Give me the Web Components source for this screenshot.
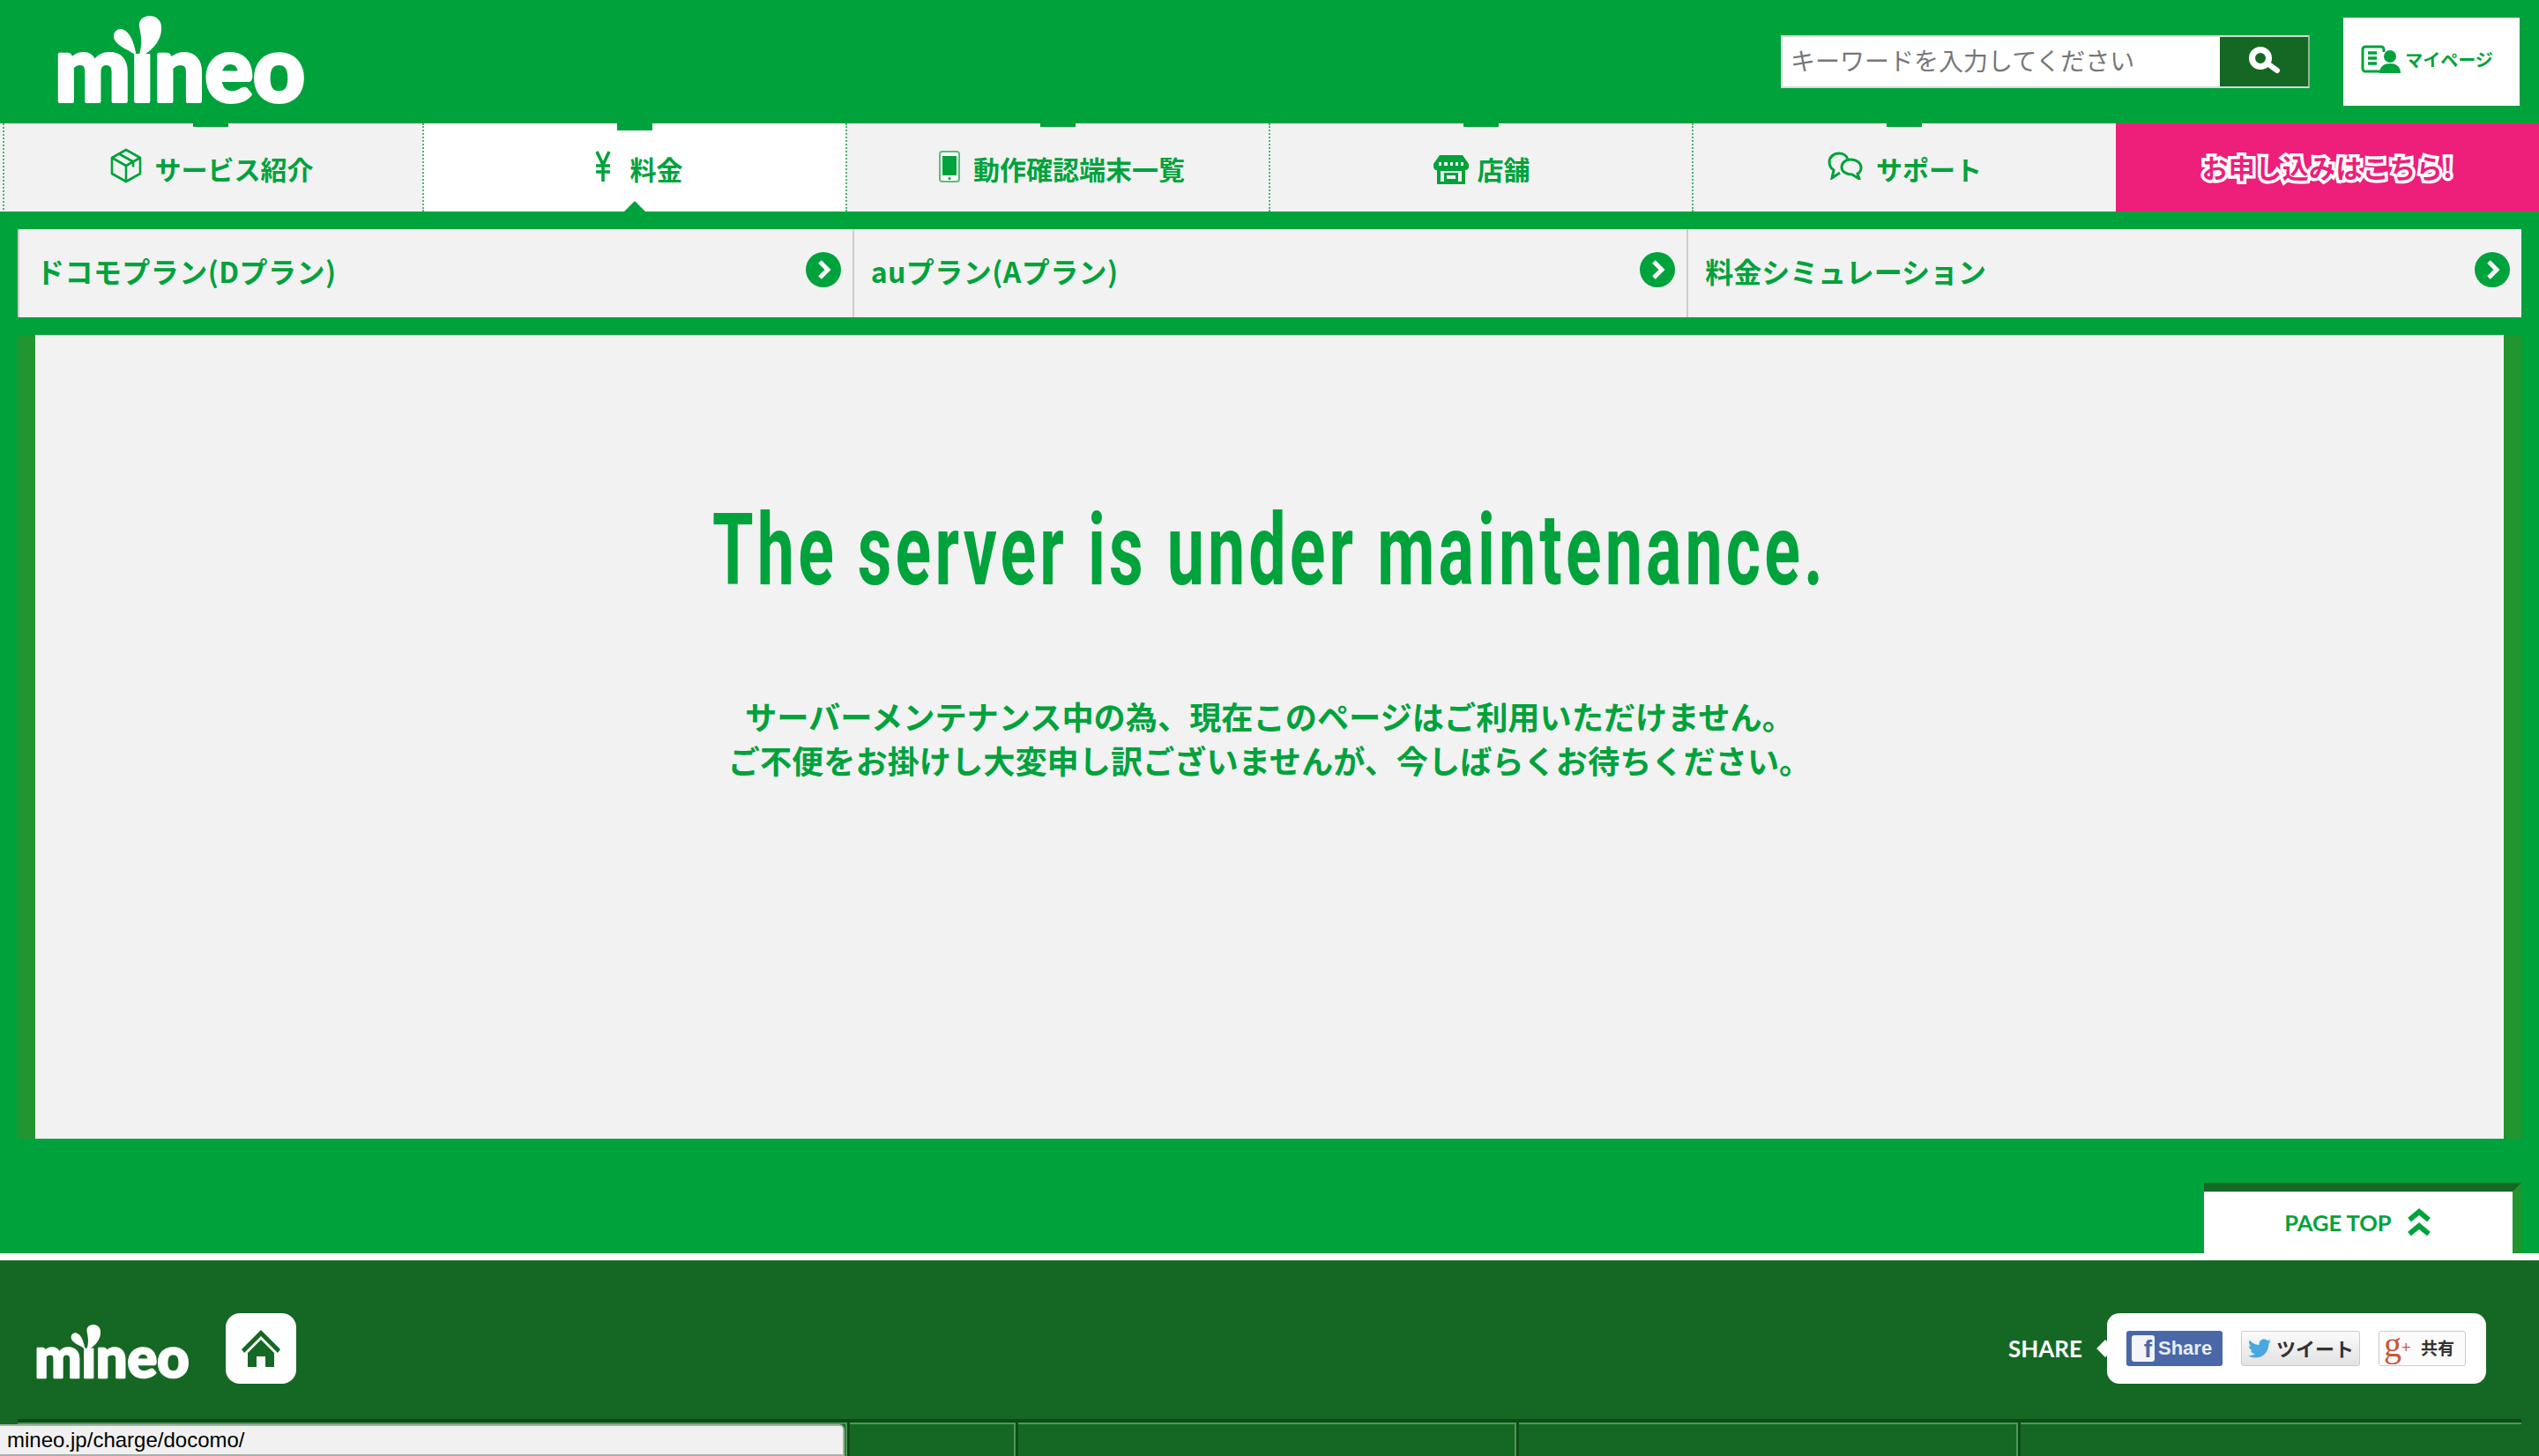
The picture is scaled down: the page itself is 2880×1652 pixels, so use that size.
<!DOCTYPE html>
<html lang="ja">
<head>
<meta charset="utf-8">
<title>mineo</title>
<style>
  html, body { margin: 0; height: 100%; overflow: hidden; }
  body { background: #00a23c; font-family: "Noto Sans CJK JP", "Noto Sans", sans-serif; }
</style>
</head>
<body>
<mineo-header></mineo-header>
<mineo-nav></mineo-nav>
<sub-nav></sub-nav>
<maintenance-panel></maintenance-panel>
<page-top></page-top>
<mineo-footer></mineo-footer>
<status-bubble>mineo.jp/charge/docomo/</status-bubble>

<script>
class MineoLogo extends HTMLElement {
  connectedCallback() {
    const w = this.getAttribute('width') || 288;
    const bg = this.getAttribute('bg') || '#00a23c';
    this.attachShadow({ mode: 'open' });
    this.shadowRoot.innerHTML = `
      <style>
        :host { display: block; line-height: 0; }
        svg { overflow: visible; display: block; }
        text { font-family: Lato, sans-serif; font-weight: 900; font-size: 102px; }
      </style>
      <svg width="${w}" viewBox="-3 0 288 100" fill="#fff">
        <text x="-1" y="97" textLength="284" lengthAdjust="spacingAndGlyphs" stroke="#fff" stroke-width="4" stroke-linejoin="round">mineo</text>
        <rect x="84" y="18" width="30" height="25" fill="${bg}"/>
        <path d="M94 47C108 42 121 28 120 13 120 4 113 0 107 0 99 0 94 5 95 12 96 20 100 30 94 47Z"/>
        <path d="M92 46C90 38 88 22 78 16 72 13 66 17 66 23 66 29 72 33 78 37 84 40 88 42 92 46Z"/>
      </svg>
    `;
  }
}
customElements.define('mineo-logo', MineoLogo);

class MineoHeader extends HTMLElement {
  connectedCallback() {
    this.attachShadow({ mode: 'open' });
    this.shadowRoot.innerHTML = `
      <style>
        :host { display: flex; height: 140px; box-sizing: border-box; padding: 18px 22px 0 60px; justify-content: space-between; align-items: flex-start; }
        .right { display: flex; align-items: center; gap: 38px; padding-top: 2px; }
        .search { display: flex; width: 600px; height: 60px; box-sizing: border-box; background: #fff; border: 2px solid #d8d8d8; border-right-color: #8fb897; }
        .field { flex: 1; padding-left: 9px; font-size: 28px; line-height: 52px; color: #777; white-space: nowrap; }
        .btn { width: 100px; background: #156823; display: flex; align-items: center; justify-content: center; }
        .mypage { width: 200px; height: 100px; background: #fff; display: flex; align-items: center; justify-content: center; gap: 4px; color: #00a23c; font-size: 20px; font-weight: 700; padding: 0 10px 6px 0; box-sizing: border-box; }
      </style>
      <mineo-logo></mineo-logo>
      <div class="right">
        <div class="search">
          <div class="field">キーワードを入力してください</div>
          <div class="btn">
            <svg width="38" height="36" viewBox="0 0 38 36"><circle cx="15" cy="14" r="9.500" fill="none" stroke="#fff" stroke-width="7"/><path d="M23 20l11 8" stroke="#fff" stroke-width="6" stroke-linecap="round"/></svg>
          </div>
        </div>
        <div class="mypage">
          <svg width="46" height="32" viewBox="0 0 46 32" fill="none">
            <path d="M24 30H5a3 3 0 0 1-3-3V5a3 3 0 0 1 3-3h18a3 3 0 0 1 3 3v3" stroke="#00a23c" stroke-width="3"/>
            <path d="M8 9h10M8 15h10M8 21h10" stroke="#00a23c" stroke-width="3.500"/>
            <circle cx="33" cy="13" r="7" fill="#00a23c"/>
            <path d="M21 32c0-8 6-11 12-11s12 3 12 11z" fill="#00a23c"/>
          </svg>
          <span>マイページ</span>
        </div>
      </div>
    `;
  }
}
customElements.define('mineo-header', MineoHeader);

class NavTab extends HTMLElement {
  connectedCallback() {
    this.attachShadow({ mode: 'open' });
    this.shadowRoot.innerHTML = `
      <style>
        :host { display: flex; position: relative; align-items: center; justify-content: center; gap: var(--gap, 15px); margin-left: -1px; background: #f2f2f2; color: #00a23c; font-size: 30px; font-weight: 700; border-left: 2px dotted #4fb56f; box-sizing: border-box; padding: 2px 0 0 var(--shift, 0); }
        :host([active]) { background: #fff; }
        :host([first]) { margin-left: 0; border-left: 0; background: repeating-linear-gradient(#4fb56f 0 2px, transparent 2px 4px) 3px 0 / 2px 100% no-repeat, #f2f2f2; }
        :host::before { content: ""; position: absolute; top: 0; left: 50%; margin-left: -21px; width: 40px; height: 4px; background: #00a23c; }
        :host([active])::before { height: 8px; }
        :host([active])::after { content: ""; position: absolute; bottom: 0; left: 50%; margin-left: -13px; border: 12px solid transparent; border-top: 0; border-bottom-color: #00a23c; }
        ::slotted(svg) { display: block; }
      </style>
      <slot name="icon"></slot><slot></slot>
    `;
  }
}
customElements.define('nav-tab', NavTab);

class MineoNav extends HTMLElement {
  connectedCallback() {
    this.attachShadow({ mode: 'open' });
    this.shadowRoot.innerHTML = `
      <style>
        :host { display: grid; grid-template-columns: repeat(6, 1fr); height: 100px; }
        .apply { display: flex; align-items: center; justify-content: center; background: #ee1e7b; color: #ee1e7b; font-size: 30px; letter-spacing: .4px; font-weight: 700; -webkit-text-stroke: 7px #fff; paint-order: stroke fill; stroke-linejoin: round; padding-bottom: 2px; box-sizing: border-box; }
      </style>
      <nav-tab first>
        <svg slot="icon" style="margin-top:-6px" width="36" height="40" viewBox="0 0 36 40" fill="none" stroke="#00a23c" stroke-width="2.600" stroke-linejoin="round">
          <path d="M18 2l16 9v18l-16 9-16-9V11z"/><path d="M2 11l16 9 16-9M18 20v18M10 6.500l16 9v6"/>
        </svg>
        サービス紹介
      </nav-tab>
      <nav-tab active style="--gap:22px;--shift:8px">
        <svg slot="icon" style="margin-top:-4px" width="18" height="36" viewBox="0 0 18 36" fill="none" stroke="#00a23c" stroke-width="3.600">
          <path d="M2 1l7 15 7-15M9 16v19M1 17h16M1 24h16"/>
        </svg>
        料金
      </nav-tab>
      <nav-tab style="--shift:8px">
        <svg slot="icon" style="margin-top:-4px" width="24" height="36" viewBox="0 0 24 36">
          <rect x="1" y="1" width="22" height="34" rx="3" fill="#fff" stroke="#5cbb7c" stroke-width="2"/>
          <rect x="4" y="6" width="16" height="22" fill="#00a23c"/>
          <circle cx="12" cy="31.500" r="1.600" fill="#00a23c"/>
        </svg>
        動作確認端末一覧
      </nav-tab>
      <nav-tab style="--gap:10px">
        <svg slot="icon" style="margin-top:2px" width="40" height="33" viewBox="0 0 40 33" fill="#00a23c">
          <path d="M7 0h26l7 10v3a4 4 0 0 1-4 4v16H4V17a4 4 0 0 1-4-4V10z"/>
          <path d="M6 8h28v4H6z" fill="#f2f2f2"/>
          <path d="M9 8h3v4H9zM16 8h3v4h-3zM22 8h3v4h-3zM28 8h3v4h-3z"/>
          <path d="M8 18h24v12H8z" fill="#f2f2f2"/>
          <path d="M12 20h16v10h-3v-7H15v7h-3z"/>
          <path d="M15 27h10v3H15z"/>
        </svg>
        店舗
      </nav-tab>
      <nav-tab>
        <svg slot="icon" style="margin-top:-6px" width="40" height="32" viewBox="0 0 40 32" fill="none" stroke="#00a23c" stroke-width="3">
          <path d="M14 24l-9 6 2-9c-3-2-5-6-5-9C2 6 7 2 13 2c5 0 9 3 10 7"/>
          <path d="M26 9c7 0 12 4 12 9 0 3-2 6-4 7l2 6-8-5c-6 0-12-3-12-8 0-5 4-9 10-9z"/>
        </svg>
        サポート
      </nav-tab>
      <div class="apply">お申し込みはこちら!</div>
    `;
  }
}
customElements.define('mineo-nav', MineoNav);

class SubLink extends HTMLElement {
  connectedCallback() {
    this.attachShadow({ mode: 'open' });
    this.shadowRoot.innerHTML = `
      <style>
        :host { display: flex; align-items: center; justify-content: space-between; padding: 0 13px 0 19px; color: #00a23c; font-size: 32px; font-weight: 700; border-left: 2px solid #ccc; box-sizing: border-box; }
        :host(:first-child) { border-left: 0; padding-left: 21px; }
        span { margin-top: -7px; }
        svg { display: block; margin-top: -8px; }
      </style>
      <span><slot></slot></span>
      <svg width="40" height="40" viewBox="0 0 40 40">
        <circle cx="20" cy="20" r="20" fill="#00a23c"/>
        <path d="M16 11l9 9-9 9" fill="none" stroke="#fff" stroke-width="5"/>
      </svg>
    `;
  }
}
customElements.define('sub-link', SubLink);

class SubNav extends HTMLElement {
  connectedCallback() {
    this.attachShadow({ mode: 'open' });
    this.shadowRoot.innerHTML = `
      <style>
        :host { display: grid; grid-template-columns: repeat(3, 1fr); height: 100px; margin: 20px 20px 0; background: #f2f2f2; }
      </style>
      <sub-link style="letter-spacing:.45px">ドコモプラン(Dプラン)</sub-link>
      <sub-link style="letter-spacing:.45px">auプラン(Aプラン)</sub-link>
      <sub-link>料金シミュレーション</sub-link>
    `;
  }
}
customElements.define('sub-nav', SubNav);

class MaintenancePanel extends HTMLElement {
  connectedCallback() {
    this.attachShadow({ mode: 'open' });
    this.shadowRoot.innerHTML = `
      <style>
        :host { display: block; height: 912px; margin: 20px 20px 0; box-sizing: border-box; padding-top: 194px; background: #f2f2f2; border: solid #21962f; border-width: 0 20px; color: #00a23c; text-align: center; }
        h1 { display: block; margin: 0; font: 700 114px/100px Roboto, sans-serif; letter-spacing: 6.3px; white-space: nowrap; transform: scaleX(.66); }
        p { margin: 113px 0 0; font-size: 36.2px; line-height: 50px; font-weight: 700; }
      </style>
      <h1>The server is under maintenance.</h1>
      <p>サーバーメンテナンス中の為、現在このページはご利用いただけません。<br>ご不便をお掛けし大変申し訳ございませんが、今しばらくお待ちください。</p>
    `;
  }
}
customElements.define('maintenance-panel', MaintenancePanel);

class PageTop extends HTMLElement {
  connectedCallback() {
    this.attachShadow({ mode: 'open' });
    this.shadowRoot.innerHTML = `
      <style>
        :host { display: flex; justify-content: flex-end; height: 130px; padding: 50px 20px 0 0; box-sizing: border-box; }
        .tab { width: 360px; height: 80px; box-sizing: border-box; background: #fff; border-top: 10px solid #156823; border-right: 10px solid #21962f; display: flex; align-items: center; justify-content: center; gap: 18px; color: #00a23c; font: 700 25.5px Lato, sans-serif; padding-right: 2px; }
        svg { display: block; }
      </style>
      <div class="tab">
        <span>PAGE TOP</span>
        <svg width="26" height="32" viewBox="0 0 26 32" fill="none" stroke="#00a23c" stroke-width="6">
          <path d="M2 13l11-9 11 9M2 29l11-9 11 9"/>
        </svg>
      </div>
    `;
  }
}
customElements.define('page-top', PageTop);

class ShareBox extends HTMLElement {
  connectedCallback() {
    this.attachShadow({ mode: 'open' });
    this.shadowRoot.innerHTML = `
      <style>
        :host { display: flex; align-items: center; position: relative; width: 430px; height: 80px; box-sizing: border-box; padding-left: 22px; gap: 21px; background: #fff; border-radius: 14px; font-family: "Liberation Sans", "Noto Sans CJK JP", sans-serif; }
        :host::before { content: ""; position: absolute; left: -12px; top: 30px; width: 20px; height: 20px; background: #fff; transform: rotate(45deg) scale(.7); }
        .b { display: flex; align-items: center; box-sizing: border-box; height: 40px; border-radius: 3px; font-weight: 700; white-space: nowrap; }
        .fb { width: 109px; background: #4a67a8; color: #e8ecf5; font-size: 22px; gap: 4px; padding-left: 6px; }
        .fb i { display: block; width: 26px; height: 30px; background: #f3f5fa; border-radius: 3px; color: #4a67a8; font: 700 28px/32px "Liberation Sans", sans-serif; text-align: right; padding-right: 3px; box-sizing: border-box; }
        .tw, .gp { border: 1px solid #ccc; background: linear-gradient(#fbfbfb, #e2e2e2); color: #333; }
        .tw { width: 135px; font-size: 22px; gap: 5px; padding-left: 6px; font-family: "Noto Sans CJK JP", sans-serif; }
        .tw span, .gp span { margin-top: -3px; }
        .gp { width: 99px; font-size: 19px; gap: 4px; padding-left: 5px; background: #fbfbfb; font-family: "Noto Sans CJK JP", sans-serif; }
        .gp i { font: 400 40px/30px "Liberation Serif", serif; color: #c9573e; width: 38px; margin-top: -8px; }
        .gp i sup { font-size: 18px; line-height: 0; vertical-align: 4px; font-family: "Liberation Sans", sans-serif; }
      </style>
      <div class="b fb"><i>f</i><span>Share</span></div>
      <div class="b tw">
        <svg width="28" height="26" viewBox="0 0 24 24" fill="#4aa8e0"><path d="M23.953 4.57a10 10 0 01-2.825.775 4.958 4.958 0 002.163-2.723c-.951.555-2.005.959-3.127 1.184a4.92 4.92 0 00-8.384 4.482C7.69 8.095 4.067 6.13 1.64 3.162a4.822 4.822 0 00-.666 2.475c0 1.71.87 3.213 2.188 4.096a4.904 4.904 0 01-2.228-.616v.06a4.923 4.923 0 003.946 4.827 4.996 4.996 0 01-2.212.085 4.936 4.936 0 004.604 3.417 9.867 9.867 0 01-6.102 2.105c-.39 0-.779-.023-1.17-.067a13.995 13.995 0 007.557 2.209c9.053 0 13.998-7.496 13.998-13.985 0-.21 0-.42-.015-.63A9.935 9.935 0 0024 4.59z"/></svg>
        <span>ツイート</span>
      </div>
      <div class="b gp"><i>g<sup>+</sup></i><span>共有</span></div>
    `;
  }
}
customElements.define('share-box', ShareBox);

class MineoFooter extends HTMLElement {
  connectedCallback() {
    this.attachShadow({ mode: 'open' });
    this.shadowRoot.innerHTML = `
      <style>
        :host { display: block; height: 222px; margin-top: 8px; position: relative; background: #156823; box-shadow: 0 -8px 0 #fff; }
        .top { display: flex; align-items: center; justify-content: space-between; height: 180px; box-sizing: border-box; padding: 20px 60px 0 38px; }
        .brand { display: flex; align-items: center; gap: 40px; }
        .brand mineo-logo { margin-top: 8px; }
        .home { width: 80px; height: 80px; background: #fff; border-radius: 16px; display: flex; align-items: center; justify-content: center; }
        .share { display: flex; align-items: center; gap: 28px; color: #fff; font: 700 26px Lato, sans-serif; }
        .cols { display: grid; grid-template-columns: 941px 191px 568px 569px 1fr; height: 42px; margin-left: 20px; margin-right: 20px; border-top: 4px solid #0e4a17; box-shadow: inset 0 2px 0 #4a9a55; box-sizing: border-box; }
        .cols div { border-right: 2px solid #4a9a55; box-shadow: 3px 0 0 #0e4a17; }
        .cols div:last-child { border: 0; box-shadow: none; }
      </style>
      <div class="top">
        <div class="brand">
          <mineo-logo width="178" bg="#156823"></mineo-logo>
          <div class="home">
            <svg width="46" height="46" viewBox="0 0 46 46" fill="#156823">
              <path d="M23 2L45 24l-3 4L23 9 4 28l-3-4z"/>
              <path d="M23 13l15 15v16H28V32h-10v12H8V28z"/>
            </svg>
          </div>
        </div>
        <div class="share"><span>SHARE</span><share-box></share-box></div>
      </div>
      <div class="cols"><div></div><div></div><div></div><div></div><div></div></div>
    `;
  }
}
customElements.define('mineo-footer', MineoFooter);

class StatusBubble extends HTMLElement {
  connectedCallback() {
    this.attachShadow({ mode: 'open' });
    this.shadowRoot.innerHTML = `
      <style>
        :host { display: block; position: fixed; left: 0; bottom: 0; width: 958px; height: 36px; box-sizing: border-box; padding-left: 8px; background: #f1f1f1; border: solid #aab0aa; border-width: 2px 2px 2px 0; border-radius: 0 6px 0 0; color: #000; font: 24px/31px "Liberation Sans", sans-serif; }
      </style>
      <slot></slot>
    `;
  }
}
customElements.define('status-bubble', StatusBubble);
</script>
</body>
</html>
